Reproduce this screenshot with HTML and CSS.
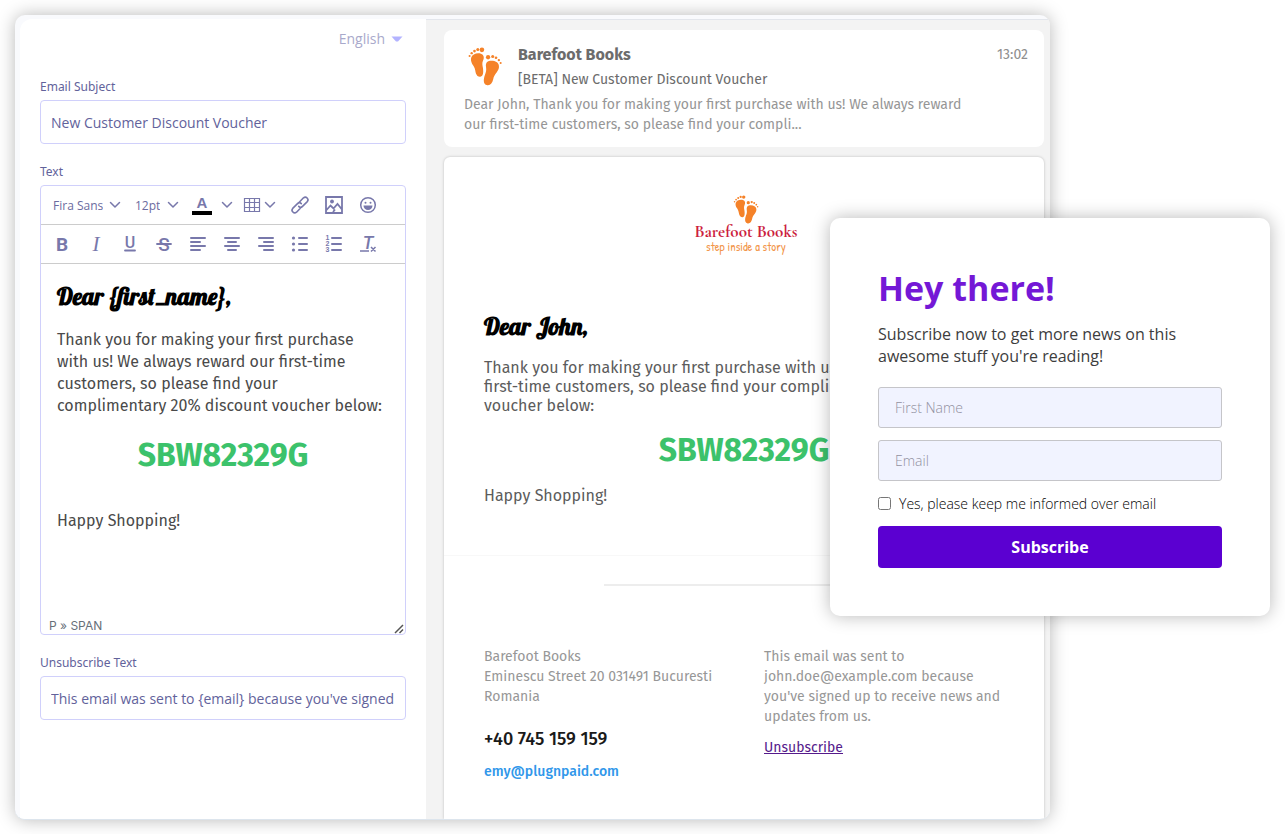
FILE: index.html
```html
<!DOCTYPE html>
<html lang="en">
<head>
<meta charset="utf-8">
<meta name="viewport" content="width=device-width, initial-scale=1">
<title>Email template editor</title>
<link rel="stylesheet" href="styles.css">
</head>
<body>
<svg class="defs" aria-hidden="true">
  <symbol id="chevron" viewBox="0 0 12 8"><path d="M1.500 1.500 6 6l4.500-4.500" fill="none" stroke="currentColor" stroke-width="1.500" stroke-linecap="round" stroke-linejoin="round"/></symbol>
  <symbol id="feet" viewBox="0 0 66 76">
    <g fill="currentColor">
      <path d="M6 21C8 14 17 11 25 13c6 2 7 8 4 14-2 5-1 9 0 14 1 8 1 16-5 17-6 1-9-5-10-12-1-6-3-9-6-13-2-4-3-8-2-12z"/>
      <circle cx="27" cy="5.500" r="4.500"/><circle cx="19" cy="5" r="3"/><circle cx="12.500" cy="8" r="2.600"/><circle cx="7" cy="12" r="2.300"/><circle cx="3" cy="17.500" r="2"/>
      <path d="M60 36c-1-7-9-10-17-9-7 1-9 6-8 12 1 6 0 10-2 15-3 8-4 18 3 20 7 2 11-3 13-11 1-6 3-9 7-14 3-4 5-8 4-13z"/>
      <circle cx="39" cy="20" r="4.200"/><circle cx="48" cy="18.500" r="3"/><circle cx="54.500" cy="21" r="2.600"/><circle cx="60" cy="25.500" r="2.300"/><circle cx="63.500" cy="31" r="2"/>
    </g>
  </symbol>
</svg>

<main class="stage">
  <div class="app">
    <section class="settings">
      <div class="language">
        <select class="language-select" aria-label="Language"><option>English</option></select>
        <svg class="caret" viewBox="0 0 12 6" aria-hidden="true"><path d="M.5.500h11L7 5.500H5z" fill="currentColor"/></svg>
      </div>

      <div class="field">
        <label class="label" for="subject">Email Subject</label>
        <input class="text-input" id="subject" type="text" value="New Customer Discount Voucher">
      </div>

      <div class="field">
        <label class="label" id="body-label" for="editor-body">Text</label>
        <div class="editor">
          <div class="toolbar">
            <span class="picker picker-font"><select class="picker-select" aria-label="Font"><option>Fira Sans</option></select><svg class="chevron"><use href="#chevron"/></svg></span>
            <span class="picker picker-size"><select class="picker-select" aria-label="Font size"><option>12pt</option></select><svg class="chevron"><use href="#chevron"/></svg></span>
            <span class="split">
              <button class="tool" type="button" aria-label="Text color"><svg class="icon" viewBox="0 0 24 24"><text x="12" y="15" class="glyph glyph-color">A</text><path d="M2 18h20v4H2z" fill="#000"/></svg></button>
              <button class="tool-menu" type="button" aria-label="More colors"><svg class="chevron"><use href="#chevron"/></svg></button>
            </span>
            <button class="tool-wide" type="button" aria-label="Table">
              <svg class="icon" viewBox="0 0 24 24"><path d="M4.500 5.500h15v13h-15zM4.500 9.500h15M4.500 14.500h15M9.500 5.500v13M14.500 5.500v13" fill="none" stroke="currentColor" stroke-width="1.200"/></svg>
              <svg class="chevron"><use href="#chevron"/></svg>
            </button>
            <button class="tool" type="button" aria-label="Link"><svg class="icon" viewBox="0 0 24 24" fill="none" stroke="currentColor" stroke-width="1.600" stroke-linecap="round" stroke-linejoin="round"><path d="M10 10.500 15.500 4.800a2.700 2.700 0 0 1 3.800 3.800l-4.800 4.800a2.700 2.700 0 0 1-3.800 0M14 13.500 8.500 19.200a2.700 2.700 0 0 1-3.800-3.800l4.800-4.800a2.700 2.700 0 0 1 3.800 0"/></svg></button>
            <button class="tool" type="button" aria-label="Image"><svg class="icon" viewBox="0 0 24 24"><path d="M4 4h16v16H4zM4.500 17l4-4.500 3 3 4-4.500 4.500 5.500M11 19l2-2.500" fill="none" stroke="currentColor" stroke-width="1.800"/><circle cx="10" cy="8.500" r="1.900" fill="currentColor"/></svg></button>
            <button class="tool" type="button" aria-label="Emoji"><svg class="icon" viewBox="0 0 24 24"><circle cx="12" cy="12" r="7.300" fill="none" stroke="currentColor" stroke-width="1.500"/><circle cx="9.500" cy="9.700" r="1" fill="currentColor"/><circle cx="14.500" cy="9.700" r="1" fill="currentColor"/><path d="M7.500 12.500h9a4.500 4.500 0 0 1-9 0z" fill="currentColor"/></svg></button>
          </div>
          <div class="toolbar">
            <button class="tool" type="button" aria-label="Bold"><svg class="icon" viewBox="0 0 24 24"><text x="12" y="19" class="glyph glyph-bold">B</text></svg></button>
            <button class="tool" type="button" aria-label="Italic"><svg class="icon" viewBox="0 0 24 24"><text x="12" y="19" class="glyph glyph-italic">I</text></svg></button>
            <button class="tool" type="button" aria-label="Underline"><svg class="icon" viewBox="0 0 24 24"><text x="12" y="16" class="glyph glyph-underline">U</text><path d="M7 18.500h10" stroke="currentColor" stroke-width="1.800" stroke-linecap="round"/></svg></button>
            <button class="tool" type="button" aria-label="Strikethrough"><svg class="icon" viewBox="0 0 24 24"><text x="12" y="19" class="glyph glyph-strike">S</text><path d="M5 12h14" stroke="currentColor" stroke-width="1.800" stroke-linecap="round"/></svg></button>
            <button class="tool" type="button" aria-label="Align left"><svg class="icon lines" viewBox="0 0 24 24"><path d="M5 6h14M5 10h9M5 14h14M5 18h9"/></svg></button>
            <button class="tool" type="button" aria-label="Align center"><svg class="icon lines" viewBox="0 0 24 24"><path d="M5 6h14M8 10h8M5 14h14M8 18h8"/></svg></button>
            <button class="tool" type="button" aria-label="Align right"><svg class="icon lines" viewBox="0 0 24 24"><path d="M5 6h14M10 10h9M5 14h14M10 18h9"/></svg></button>
            <button class="tool" type="button" aria-label="Bullet list"><svg class="icon lines" viewBox="0 0 24 24"><path d="M11 6h8M11 12h8M11 18h8"/><g fill="currentColor" stroke="none"><circle cx="5.500" cy="6" r="1.600"/><circle cx="5.500" cy="12" r="1.600"/><circle cx="5.500" cy="18" r="1.600"/></g></svg></button>
            <button class="tool" type="button" aria-label="Numbered list"><svg class="icon lines" viewBox="0 0 24 24"><path d="M10 6h9M10 12h9M10 18h9"/><g class="glyph glyph-number"><text x="5.500" y="8">1</text><text x="5.500" y="14">2</text><text x="5.500" y="20">3</text></g></svg></button>
            <button class="tool" type="button" aria-label="Clear formatting"><svg class="icon" viewBox="0 0 24 24"><text x="12" y="17" class="glyph glyph-clear">T</text><path d="M4 19h9M15 15l4.500 4.500M19.500 15 15 19.500" fill="none" stroke="currentColor" stroke-width="1.500"/></svg></button>
          </div>
          <div class="editor-body" id="editor-body" contenteditable="true" role="textbox" aria-multiline="true" aria-labelledby="body-label">
            <h2 class="greeting">Dear {first_name},</h2>
            <p class="editor-text">Thank you for making your first purchase<br>with us! We always reward our first-time<br>customers, so please find your<br>complimentary 20% discount voucher below:</p>
            <p class="code editor-code">SBW82329G</p>
            <p class="editor-text">Happy Shopping!</p>
          </div>
          <div class="statusbar">
            <span>P » SPAN</span>
            <svg class="resize" viewBox="0 0 10 10" aria-hidden="true"><path d="M1 9l8-8M5.500 9 9 5.500" stroke="currentColor" stroke-width="1.500"/></svg>
          </div>
        </div>
      </div>

      <div class="field">
        <label class="label" for="unsubscribe">Unsubscribe Text</label>
        <input class="text-input" id="unsubscribe" type="text" value="This email was sent to {email} because you've signed">
      </div>
    </section>

    <section class="preview">
      <header class="message">
        <div class="message-top">
          <svg class="feet" role="img" aria-label="Barefoot Books"><use href="#feet"/></svg>
          <div class="message-title">
            <strong class="sender">Barefoot Books</strong>
            <span class="subject">[BETA] New Customer Discount Voucher</span>
          </div>
          <time class="time">13:02</time>
        </div>
        <p class="snippet">Dear John, Thank you for making your first purchase with us! We always reward<br>our first-time customers, so please find your compli...</p>
      </header>

      <article class="mail">
        <div class="mail-main">
          <div class="brand">
            <svg class="brand-feet" aria-hidden="true"><use href="#feet"/></svg>
            <span class="brand-name">Barefoot Books</span>
            <span class="brand-tag">step inside a story</span>
          </div>
          <h2 class="greeting">Dear John,</h2>
          <p class="mail-text">Thank you for making your first purchase with us! We always reward our<br>first-time customers, so please find your complimentary 20% discount<br>voucher below:</p>
          <p class="code mail-code">SBW82329G</p>
          <p class="mail-text">Happy Shopping!</p>
        </div>
        <footer class="mail-footer">
          <hr class="rule">
          <div class="columns">
            <div>
              <address class="small">Barefoot Books<br>Eminescu Street 20 031491 Bucuresti<br>Romania</address>
              <p class="phone">+40 745 159 159</p>
              <a class="mail-link" href="mailto:emy@plugnpaid.com">emy@plugnpaid.com</a>
            </div>
            <div>
              <p class="small">This email was sent to<br>john.doe@example.com because<br>you've signed up to receive news and<br>updates from us.</p>
              <a class="unsubscribe" href="#unsubscribe">Unsubscribe</a>
            </div>
          </div>
        </footer>
      </article>
    </section>
  </div>

  <form class="popup">
    <h1 class="popup-title">Hey there!</h1>
    <p class="popup-text">Subscribe now to get more news on this awesome stuff you're reading!</p>
    <input class="popup-input" type="text" placeholder="First Name" aria-label="First Name">
    <input class="popup-input" type="email" placeholder="Email" aria-label="Email">
    <label class="consent"><input class="checkbox" type="checkbox">Yes, please keep me informed over email</label>
    <button class="subscribe" type="button">Subscribe</button>
  </form>
</main>
</body>
</html>
```
FILE: styles.css
```css
* { box-sizing: border-box; }

body {
  margin: 0;
  background: #fff;
  font-family: "Open Sans", "Noto Sans", sans-serif;
  font-size: 14px;
}

h1, h2, p { margin: 0; }

button, input, select {
  font: inherit;
  color: inherit;
}

button {
  border: 0;
  padding: 0;
  background: none;
}

.defs { position: absolute; width: 0; height: 0; }

.stage {
  position: relative;
  padding: 15px 235px 15px 15px;
}

/* Window */
.app {
  display: grid;
  grid-template-columns: 406px 1fr;
  padding: 4px 0 0 5px;
  overflow: hidden;
  border-radius: 10px;
  background: #f9fafd;
  border-bottom: 1px solid #dde5ed;
  box-shadow: 0 0 18px rgba(0, 0, 0, 0.28);
}

/* Settings column */
.settings {
  padding: 10px 20px;
  border-radius: 12px 0 0 0;
  background: #fff;
  color: #62629b;
}

.language {
  display: flex;
  justify-content: flex-end;
  align-items: center;
  gap: 6px;
  height: 19px;
  margin: 0 3px 11px 0;
  color: #a9a9cb;
}

.language-select, .picker-select {
  appearance: none;
  border: 0;
  padding: 0;
  background: none;
  field-sizing: content;
}

.caret { width: 12px; height: 6px; color: #b3b3ff; }

.field { padding-top: 20px; }

.label {
  display: block;
  margin-bottom: 5px;
  font-family: "Noto Sans", "Open Sans", sans-serif;
  font-size: 12px;
  line-height: 16px;
}

.text-input {
  display: block;
  width: 100%;
  height: 44px;
  padding: 0 10px;
  border: 1px solid #d0d0fb;
  border-radius: 4px;
  background: #fff;
}

.editor {
  border: 1px solid #d0d0fb;
  border-radius: 4px;
}

.toolbar {
  display: flex;
  align-items: center;
  height: 39px;
  padding: 0 4px;
  border-bottom: 1px solid #ccc;
  color: #7878ab;
}

.picker {
  display: flex;
  align-items: center;
  justify-content: space-between;
  padding: 0 6px 0 8px;
  font-size: 12px;
  color: #6b6ba0;
}

.picker-font { width: 82px; }
.picker-size { width: 58px; }

.chevron { width: 12px; height: 8px; color: #7878ab; }

.split { display: flex; align-items: center; }

.tool, .tool-menu, .tool-wide {
  display: flex;
  align-items: center;
  justify-content: center;
  height: 34px;
}

.tool { width: 34px; }
.tool-menu { width: 16px; }
.tool-wide { width: 46px; margin-right: 2px; }

.icon { width: 24px; height: 24px; }

.lines {
  fill: none;
  stroke: currentColor;
  stroke-width: 2;
  stroke-linecap: round;
}

.glyph {
  fill: currentColor;
  stroke: none;
  text-anchor: middle;
  font-family: "Liberation Sans", sans-serif;
}

.glyph-color { font-size: 15px; font-weight: 700; }
.glyph-bold { font: 700 19px Roboto, sans-serif; }
.glyph-italic { font: italic 21px "Liberation Serif", serif; }
.glyph-underline { font: 500 16px Roboto, sans-serif; }
.glyph-strike { font: 500 19px Roboto, sans-serif; }
.glyph-number { font-size: 7px; font-weight: 700; }
.glyph-clear { font: italic 500 18px Roboto, sans-serif; }

.editor-body {
  padding: 15px 16px;
  height: 353px;
  outline: 0;
}

.greeting {
  font: 700 24px/34px Lobster, "Liberation Serif", serif;
  color: #000;
}

.editor-text {
  margin-top: 16px;
  font: 400 16px/22px "Fira Sans", Roboto, sans-serif;
  color: #4a4a4a;
}

.code {
  font: 700 32px/42px "Fira Sans", "Open Sans", sans-serif;
  text-align: center;
  color: #3cc26b;
}

.editor-code { margin: 17px 0 34px; }

.statusbar {
  display: flex;
  align-items: center;
  justify-content: space-between;
  height: 17px;
  padding: 0 0 0 8px;
  font: 12px/16px Inter, sans-serif;
  color: #677079;
}

.resize { width: 10px; height: 10px; align-self: flex-end; margin-right: 1px; color: #555; }

/* Preview column */
.preview {
  display: flex;
  flex-direction: column;
  gap: 10px;
  padding: 10px 6px 0 18px;
  border-top: 1px solid #e3e6ec;
  background: #f3f3f3;
  font-family: "Fira Sans", Roboto, sans-serif;
}

.message {
  padding: 12px 16px 12px 20px;
  border-radius: 8px;
  background: #fff;
}

.message-top { display: flex; align-items: flex-start; }

.feet { width: 34px; height: 39px; margin: 5px 16px 0 4px; color: #f58229; }

.message-title { flex: 1; display: flex; flex-direction: column; }

.sender { font-size: 16px; line-height: 26px; color: #6c6c6c; }
.subject { line-height: 24px; color: #6c6c6c; }
.time { line-height: 26px; color: #8f8f8f; }
.snippet { margin-top: 3px; line-height: 20px; color: #969696; }

.mail {
  border-radius: 6px 6px 0 0;
  background: #fff;
  box-shadow: 0 0 3px rgba(0, 0, 0, 0.22);
}

.mail-main {
  padding: 38px 40px 50px;
  border-bottom: 1px solid #f8f8f8;
}

.brand {
  display: flex;
  flex-direction: column;
  align-items: center;
  margin-bottom: 55px;
  padding-left: 4px;
}

.brand-feet { width: 26px; height: 29px; color: #f58229; }
.brand-name { font: 700 17px/16px "Cormorant Garamond", "Cormorant", "EB Garamond", "Liberation Serif", serif; color: #cc1f3f; }
.brand-tag { font: 12px/14px "Patrick Hand", "Indie Flower", "Caveat", "Open Sans", sans-serif; color: #f2954a; }

.mail-text {
  margin-top: 15px;
  font-size: 16px;
  line-height: 19px;
  color: #5c5c5c;
  white-space: nowrap;
}

.mail-code { margin: 14px 0; }

.mail-footer { padding: 28px 40px 37px; }

.rule {
  width: 54%;
  height: 2px;
  margin: 0 auto 61px;
  border: 0;
  background: #ededed;
}

.columns { display: grid; grid-template-columns: 1fr 1fr; gap: 40px; }

.small {
  font-style: normal;
  line-height: 20px;
  color: #979797;
  white-space: nowrap;
}

.phone { margin: 20px 0 11px; font-size: 18px; line-height: 24px; font-weight: 500; color: #1a1a1a; }

.mail-link { display: block; font-weight: 500; line-height: 20px; color: #3097ea; text-decoration: none; }

.unsubscribe { display: block; margin-top: 11px; line-height: 20px; color: #551a8b; }

/* Subscription popup */
.popup {
  position: absolute;
  top: 218px;
  right: 15px;
  display: flex;
  flex-direction: column;
  gap: 12px;
  width: 440px;
  padding: 48px;
  border-radius: 10px;
  background: #fff;
  box-shadow: 0 0 18px rgba(0, 0, 0, 0.28);
}

.popup-title { font-size: 34px; line-height: 45px; font-weight: 700; color: #7418d6; }

.popup-text { margin-bottom: 8px; font-size: 16px; line-height: 22px; color: #3d3d3d; }

.popup-input {
  width: 100%;
  height: 41px;
  padding: 0 16px;
  border: 1px solid #c5c5c9;
  border-radius: 3px;
  background: #f1f3ff;
  font-weight: 300;
}

.popup-input::placeholder { color: #9191a0; opacity: 1; }

.consent {
  display: flex;
  align-items: center;
  gap: 8px;
  height: 21px;
  font-weight: 300;
  color: #000;
}

.checkbox { width: 13px; height: 13px; margin: 0; }

.subscribe {
  height: 42px;
  border-radius: 4px;
  background: #5b00d1;
  color: #fff;
  font-size: 16px;
  font-weight: 700;
}
```
